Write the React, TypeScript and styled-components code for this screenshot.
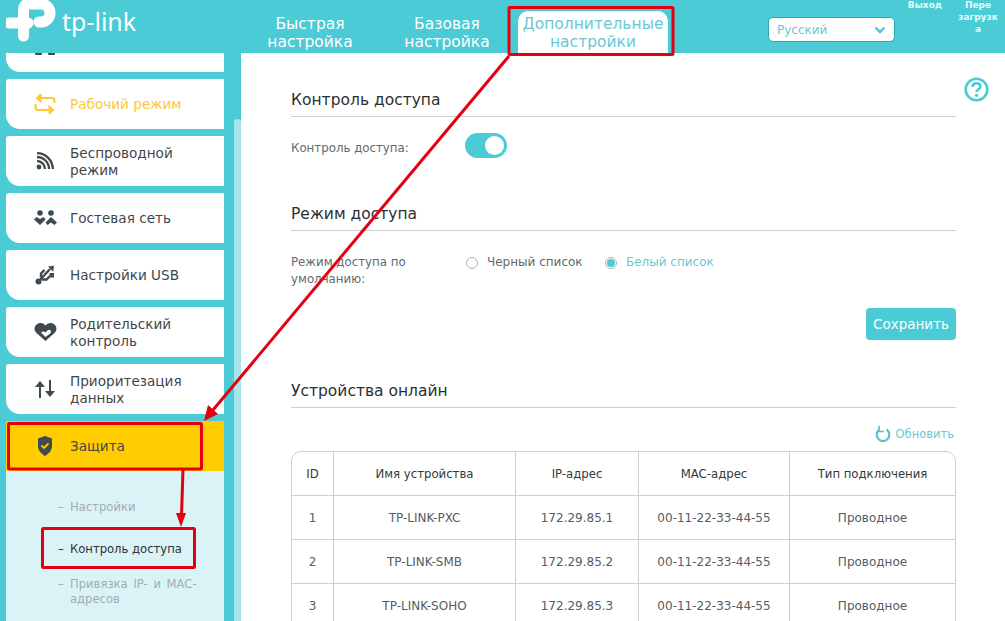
import React from "react";
import styled, { createGlobalStyle } from "styled-components";

const TEAL = "#4acbd6";
const INK = "#3f4649";

const GlobalStyle = createGlobalStyle`
  html, body {
    margin: 0;
    height: 100%;
    overflow: hidden;
    background: #fff;
  }
  body {
    font-family: "DejaVu Sans", Verdana, sans-serif;
    color: ${INK};
  }
  * { box-sizing: border-box; }
`;

const Page = styled.div`
  position: relative;
  width: 1005px;
  height: 621px;
  overflow: hidden;
  display: flex;
  flex-direction: column;
`;

const Header = styled.header`
  height: 53px;
  flex: none;
  background: ${TEAL};
  display: flex;
  align-items: flex-start;
  color: #fff;
`;

const LogoBox = styled.div`
  width: 245px;
  height: 53px;
  flex: none;
  padding: 0 0 0 6px;
  display: flex;
  align-items: flex-start;
`;

const LogoText = styled.span`
  font-family: "Noto Sans", "Open Sans", sans-serif;
  font-size: 25px;
  line-height: 30px;
  margin: 6px 0 0 6px;
  color: #fff;
`;

const Tab = styled.div<{ $active?: boolean; $offset: number; $width: number }>`
  width: ${(p) => p.$width}px;
  height: 42px;
  margin-top: 11px;
  margin-left: ${(p) => p.$offset}px;
  font-size: 15.5px;
  line-height: 18px;
  padding-top: 4px;
  text-align: center;
  border-radius: 10px 10px 0 0;
  background: ${(p) => (p.$active ? "#fff" : "transparent")};
  color: ${(p) => (p.$active ? "#6cc7d3" : "#fff")};
`;

const LangSelect = styled.div`
  width: 127px;
  height: 25px;
  margin: 17px 0 0 100px;
  flex: none;
  background: #fff;
  border: 1px solid #2aa7b2;
  border-radius: 5px;
  padding: 0 8px;
  display: flex;
  align-items: center;
  justify-content: space-between;
  font-size: 12px;
  color: #6cc7d3;
`;

const TopLink = styled.div<{ $width: number; $offset: number }>`
  width: ${(p) => p.$width}px;
  margin-left: ${(p) => p.$offset}px;
  flex: none;
  font-size: 9px;
  font-weight: 700;
  line-height: 12px;
  text-align: center;
  margin-top: -1px;
  color: #eafafb;
`;

const Body = styled.div`
  flex: 1;
  min-height: 0;
  display: flex;
`;

const Sidebar = styled.aside`
  position: relative;
  width: 241px;
  flex: none;
  background: ${TEAL};
  overflow: hidden;
  padding-left: 6px;
`;

const ScrollThumb = styled.div`
  position: absolute;
  right: 0;
  top: 66px;
  bottom: 0;
  width: 7px;
  border-radius: 4px 4px 0 0;
  background: #a6e5ea;
`;

const NavList = styled.div`
  width: 218px;
  margin-top: -31px;
  display: flex;
  flex-direction: column;
  gap: 7px;
`;

const NavItem = styled.div<{ $tone?: "current" | "open" }>`
  height: 50px;
  flex: none;
  display: flex;
  align-items: center;
  background: ${(p) => (p.$tone === "open" ? "#ffcc00" : "#fff")};
  border-radius: ${(p) => (p.$tone === "open" ? "0" : "3px 0 0 14px")};
  color: ${(p) => (p.$tone === "current" ? "#fcc83a" : INK)};
  font-size: 13.6px;
  line-height: 17px;
`;

const NavLabel = styled.div<{ $lines: number }>`
  padding-top: ${(p) => (p.$lines > 1 ? 2 : 0)}px;
`;

const NavIcon = styled.div`
  width: 64px;
  flex: none;
  display: flex;
  justify-content: center;
  padding-left: 14px;
`;

const SubMenu = styled.div`
  margin-top: -7px;
  background: #daf3f7;
  height: 160px;
  padding: 29px 0 0 52px;
  display: flex;
  flex-direction: column;
`;

const SubItem = styled.div<{ $active?: boolean; $gap: number; $wordGap?: number }>`
  display: flex;
  margin-top: ${(p) => p.$gap}px;
  font-size: 11.6px;
  word-spacing: ${(p) => p.$wordGap ?? 0}px;
  line-height: 15px;
  color: ${(p) => (p.$active ? "#2e3336" : "#a2adb0")};
`;

const SubDash = styled.span`
  width: 12px;
  flex: none;
`;

const Main = styled.main`
  position: relative;
  flex: 1;
  padding: 0 49px 0 50px;
  background: #fff;
`;

const HelpIcon = styled.div`
  position: absolute;
  top: 24px;
  right: 16px;
  width: 25px;
  height: 25px;
`;

const SectionTitle = styled.div<{ $top: number }>`
  margin-top: ${(p) => p.$top}px;
  height: 29px;
  border-bottom: 1px solid #cfcfcf;
  font-size: 15.5px;
  line-height: 24px;
  color: #2b2f31;
`;

const SwitchRow = styled.div`
  display: flex;
  align-items: center;
  height: 25px;
  margin-top: 16px;
  color: #62696c;
`;

const FieldLabel = styled.div<{ $nudge?: number }>`
  width: 174px;
  flex: none;
  font-size: 11.8px;
  padding-top: ${(p) => p.$nudge ?? 0}px;
`;

const Toggle = styled.div`
  width: 42px;
  height: 25px;
  border-radius: 13px;
  background: ${TEAL};
  display: flex;
  align-items: center;
  justify-content: flex-end;
  padding-right: 3px;
`;

const ToggleKnob = styled.div`
  width: 19px;
  height: 19px;
  border-radius: 50%;
  background: #fff;
`;

const RadioRow = styled.div`
  display: flex;
  align-items: flex-start;
  margin-top: 23px;
  font-size: 12px;
  line-height: 17px;
  color: #62696c;
`;

const RadioOption = styled.div<{ $checked?: boolean; $width: number }>`
  width: ${(p) => p.$width}px;
  flex: none;
  display: flex;
  align-items: center;
  gap: 9px;
  padding-left: 1px;
  color: ${(p) => (p.$checked ? "#6cc7d3" : "#62696c")};
`;

const RadioDot = styled.span<{ $checked?: boolean }>`
  width: 12px;
  height: 12px;
  flex: none;
  border-radius: 50%;
  border: 1px solid #b0b0b0;
  display: flex;
  align-items: center;
  justify-content: center;
  &::after {
    content: "";
    width: 8px;
    height: 8px;
    border-radius: 50%;
    background: ${(p) => (p.$checked ? TEAL : "transparent")};
  }
`;

const SaveRow = styled.div`
  display: flex;
  justify-content: flex-end;
  margin-top: 20px;
`;

const SaveButton = styled.div`
  width: 90px;
  height: 32px;
  border-radius: 4px;
  background: ${TEAL};
  color: #fff;
  font-size: 13.5px;
  display: flex;
  align-items: center;
  justify-content: center;
`;

const RefreshRow = styled.div`
  height: 20px;
  margin-top: 16px;
  display: flex;
  justify-content: flex-end;
  align-items: center;
  gap: 5px;
  font-size: 11.5px;
  color: #6cc7d3;
  padding-right: 2px;
`;

const TableFrame = styled.div`
  margin-top: 7px;
  border: 1px solid #cfcfcf;
  border-radius: 10px 10px 0 0;
  overflow: hidden;
`;

const Row = styled.div<{ $first?: boolean }>`
  display: grid;
  grid-template-columns: 41px 182px 123px 151px 1fr;
  height: ${(p) => (p.$first ? 43 : 44)}px;
  border-top: ${(p) => (p.$first ? "none" : "1px solid #cfcfcf")};
`;

const Cell = styled.div<{ $head?: boolean }>`
  display: flex;
  align-items: center;
  justify-content: center;
  font-size: ${(p) => (p.$head ? 11.7 : 12)}px;
  color: ${(p) => (p.$head ? "#33383a" : "#565c5f")};
  & + & {
    border-left: 1px solid #cfcfcf;
  }
`;

const Annotations = styled.svg`
  position: absolute;
  left: 0;
  top: 0;
  pointer-events: none;
`;

const Logo = () => (
  <svg width="50" height="42" viewBox="0 0 50 42" fill="none" stroke="#fff" strokeWidth="11">
    <path d="M3 23H22" strokeLinecap="round" />
    <path d="M17.5 36V10Q17.5 4 23 4H35A9 9 0 0 1 35 22H33" strokeLinecap="round" />
  </svg>
);

const ICON_COLOR = "#3f4a50";

const icons: Record<string, React.ReactNode> = {
  top: (
    <svg width="22" height="22" viewBox="0 0 22 22" fill={ICON_COLOR}>
      <rect x="1" y="14" width="7" height="5" rx="1" />
      <rect x="14" y="14" width="7" height="5" rx="1" />
    </svg>
  ),
  mode: (
    <svg width="22" height="20" viewBox="0 0 22 20" fill="none" stroke="#fcc83a" strokeWidth="2">
      <path d="M6 4H18Q20.5 4 20.5 6.5V9" />
      <path d="M16 16H4Q1.5 16 1.5 13.5V10" />
      <path d="M6.5 .8L3 4L6.5 7.2Z" fill="#fcc83a" />
      <path d="M15.5 12.8L19 16L15.5 19.2Z" fill="#fcc83a" />
    </svg>
  ),
  wifi: (
    <svg width="18" height="18" viewBox="0 0 18 18" fill="none" stroke={ICON_COLOR} strokeWidth="2.3">
      <circle cx="3" cy="15" r="2.4" fill={ICON_COLOR} stroke="none" />
      <path d="M1 9A8 8 0 0 1 9 17" />
      <path d="M1 5A12 12 0 0 1 13 17" />
      <path d="M1 1.2A15.8 15.8 0 0 1 16.8 17" />
    </svg>
  ),
  guest: (
    <svg width="23" height="16" viewBox="0 0 23 16" fill={ICON_COLOR}>
      <circle cx="6" cy="3" r="2.8" />
      <circle cx="17" cy="3" r="2.8" />
      <path d="M0 9.5L2.5 7L6 9L9.5 7L11.5 9.5L6 15Z" />
      <path d="M23 12.5L20.5 15L17 12.5L13.5 15L11.5 12.5L17 7Z" />
    </svg>
  ),
  usb: (
    <svg width="20" height="20" viewBox="0 0 20 20" fill="none" stroke={ICON_COLOR} strokeWidth="2.4">
      <circle cx="3.5" cy="16.5" r="3" fill={ICON_COLOR} stroke="none" />
      <path d="M4 16L15 4" />
      <path d="M6 12.5V8.5L9.5 5" />
      <path d="M7 14.5H11.5L15 11" />
      <path d="M13 1.5L19 .8L18.2 6.8Z" fill={ICON_COLOR} stroke="none" />
      <rect x="14.5" y="8" width="4.5" height="4.5" fill={ICON_COLOR} stroke="none" />
    </svg>
  ),
  parental: (
    <svg width="23" height="20" viewBox="0 0 23 20" fill={ICON_COLOR}>
      <path d="M11.5 19L2 10.5C-1.5 6 2 1 6.5 1C8.5 1 10 1.8 11.5 3.5C13 1.8 14.5 1 16.5 1C21 1 24.5 6 21 10.5Z" />
      <path d="M11.5 15L7 10.8C8.8 9 10.5 9.4 11.5 10.5C12.8 9.4 14.5 6.5 16.5 8.5C17.8 10 16.6 11 15.5 12Z" fill="#fff" />
    </svg>
  ),
  priority: (
    <svg width="20" height="20" viewBox="0 0 20 20" fill={ICON_COLOR}>
      <rect x="4" y="5" width="2" height="14" />
      <path d="M0 8L5 2L10 8Z" />
      <rect x="14" y="1" width="2" height="14" />
      <path d="M10 12L15 18L20 12Z" />
    </svg>
  ),
  shield: (
    <svg width="16" height="20" viewBox="0 0 16 20">
      <path d="M8 0L15 2.5V10C15 15 11 18 8 20C5 18 1 15 1 10V2.5Z" fill={ICON_COLOR} />
      <path d="M4.5 9.5L7 12L11.5 7.5" fill="none" stroke="#ffcc00" strokeWidth="1.8" />
    </svg>
  ),
};

const NAV = [
  { icon: "top", lines: 1, label: "" },
  { icon: "mode", lines: 1, label: "Рабочий режим", tone: "current" as const },
  { icon: "wifi", lines: 2, label: <>Беспроводной<br />режим</> },
  { icon: "guest", lines: 1, label: "Гостевая сеть" },
  { icon: "usb", lines: 1, label: "Настройки USB" },
  { icon: "parental", lines: 2, label: <>Родительский<br />контроль</> },
  { icon: "priority", lines: 2, label: <>Приоритезация<br />данных</> },
  { icon: "shield", lines: 1, label: "Защита", tone: "open" as const },
];

const DEVICES = [
  ["1", "TP-LINK-PXC", "172.29.85.1", "00-11-22-33-44-55", "Проводное"],
  ["2", "TP-LINK-SMB", "172.29.85.2", "00-11-22-33-44-55", "Проводное"],
  ["3", "TP-LINK-SOHO", "172.29.85.3", "00-11-22-33-44-55", "Проводное"],
];

export default function App() {
  return (
    <Page>
      <GlobalStyle />
      <Header>
        <LogoBox>
          <Logo />
          <LogoText>tp-link</LogoText>
        </LogoBox>
        <Tab $offset={0} $width={130}>Быстрая<br />настройка</Tab>
        <Tab $offset={7} $width={130}>Базовая<br />настройка</Tab>
        <Tab $offset={6} $width={150} $active>Дополнительные<br />настройки</Tab>
        <LangSelect>
          Русский
          <svg width="12" height="8" viewBox="0 0 12 8" fill="none" stroke="#55c3ce" strokeWidth="2.4">
            <path d="M1.5 1.5L6 6L10.5 1.5" />
          </svg>
        </LangSelect>
        <TopLink $width={50} $offset={5}>Выход</TopLink>
        <TopLink $width={44} $offset={6}>Пере<br />загрузк<br />а</TopLink>
      </Header>
      <Body>
        <Sidebar>
          <NavList>
            {NAV.map((item) => (
              <NavItem key={item.icon} $tone={item.tone}>
                <NavIcon>{icons[item.icon]}</NavIcon>
                <NavLabel $lines={item.lines}>{item.label}</NavLabel>
              </NavItem>
            ))}
            <SubMenu>
              <SubItem $gap={0}><SubDash>–</SubDash>Настройки</SubItem>
              <SubItem $gap={27} $active><SubDash>–</SubDash>Контроль доступа</SubItem>
              <SubItem $gap={20} $wordGap={2}><SubDash>–</SubDash><div>Привязка IP- и MAC-<br />адресов</div></SubItem>
            </SubMenu>
          </NavList>
          <ScrollThumb />
        </Sidebar>
        <Main>
          <HelpIcon>
            <svg width="25" height="25" viewBox="0 0 25 25" fill="none" stroke={TEAL} strokeWidth="2.6">
              <circle cx="12.5" cy="12.5" r="10.8" />
              <path d="M8.6 10C8.6 7.6 10.4 6.3 12.5 6.3C14.7 6.3 16.4 7.6 16.4 9.7C16.4 12.3 12.5 12.3 12.5 15" />
              <circle cx="12.5" cy="18.3" r="1.6" fill={TEAL} stroke="none" />
            </svg>
          </HelpIcon>
          <SectionTitle $top={35}>Контроль доступа</SectionTitle>
          <SwitchRow>
            <FieldLabel $nudge={5}>Контроль доступа:</FieldLabel>
            <Toggle><ToggleKnob /></Toggle>
          </SwitchRow>
          <SectionTitle $top={44}>Режим доступа</SectionTitle>
          <RadioRow>
            <FieldLabel>Режим доступа по<br />умолчанию:</FieldLabel>
            <RadioOption $width={139}><RadioDot />Черный список</RadioOption>
            <RadioOption $width={140} $checked><RadioDot $checked />Белый список</RadioOption>
          </RadioRow>
          <SaveRow><SaveButton>Сохранить</SaveButton></SaveRow>
          <SectionTitle $top={39}>Устройства онлайн</SectionTitle>
          <RefreshRow>
            <svg width="16" height="18" viewBox="0 0 16 18" fill="none" stroke="#55c3ce" strokeWidth="2.2">
              <path d="M4.5 4.5A6.3 6.3 0 1 0 11.5 4.5" />
              <path d="M4 .8V6.5H9" strokeWidth="1.6" />
            </svg>
            Обновить
          </RefreshRow>
          <TableFrame>
            <Row $first>
              {["ID", "Имя устройства", "IP-адрес", "MAC-адрес", "Тип подключения"].map((h) => (
                <Cell key={h} $head>{h}</Cell>
              ))}
            </Row>
            {DEVICES.map((d) => (
              <Row key={d[0]}>
                {d.map((v, i) => (
                  <Cell key={i}>{v}</Cell>
                ))}
              </Row>
            ))}
          </TableFrame>
        </Main>
      </Body>
      <Annotations width="1005" height="621" viewBox="0 0 1005 621" fill="none">
        <g stroke="#e3000f" strokeWidth="3">
          <rect x="509" y="7.5" width="164" height="47" rx="1" />
          <rect x="8.5" y="423.5" width="193" height="45.5" rx="1" />
          <rect x="42.5" y="528.5" width="152" height="39" rx="1" />
          <path d="M509 56L213 410" />
          <path d="M183 469L181.5 516" />
        </g>
        <path d="M204 421L208 405L218 414Z" fill="#e3000f" />
        <path d="M181 527L176 513H186Z" fill="#e3000f" />
      </Annotations>
    </Page>
  );
}
